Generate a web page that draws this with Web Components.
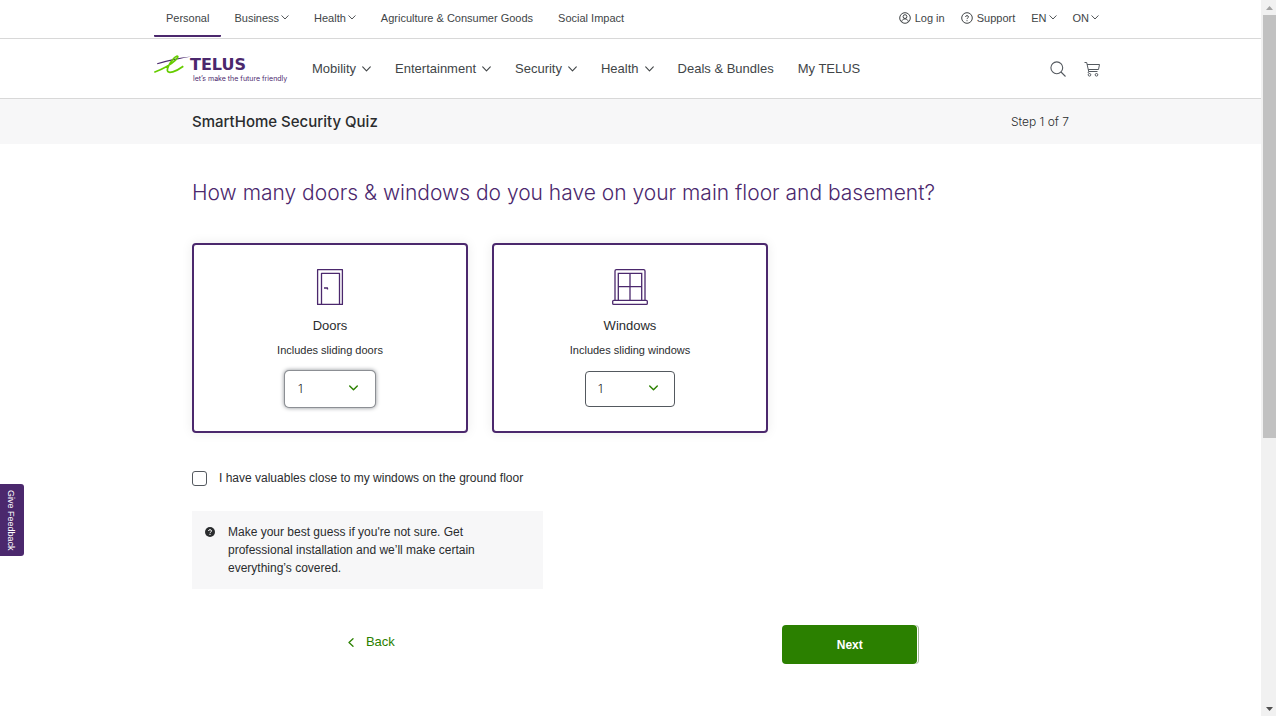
<!DOCTYPE html>
<html lang="en">
<head>
<meta charset="utf-8">
<meta name="viewport" content="width=device-width, initial-scale=1">
<title>SmartHome Security Quiz | TELUS</title>
<style>
  :root {
    --purple: #4b286d;
    --green: #2b8000;
    --text: #2a2c2e;
    --muted: #54595f;
    --line: #d8d8d8;
    --panel: #f7f7f8;
    --sans: "Liberation Sans", Arial, sans-serif;
    --light: Inter, "Liberation Sans", sans-serif;
  }
  body { margin: 0; background: #fff; color: var(--text); font: 12px/18px var(--sans); }
</style>
</head>
<body>
<telus-app></telus-app>
<script>
const define = (name, html) => {
  const template = document.createElement('template');
  template.innerHTML = html;
  customElements.define(name, class extends HTMLElement {
    constructor() {
      super();
      this.attachShadow({ mode: 'open' }).append(template.content.cloneNode(true));
    }
  });
};

define('ui-chevron', `
  <style>
    :host { display: block; width: 9px; height: 6px; flex: none; }
    :host([small]) { width: 8px; height: 5px; }
    svg { display: block; width: 100%; height: 100%; }
  </style>
  <svg viewBox="0 0 9 6" fill="none" stroke="currentColor" stroke-width="var(--w, 1.1)" stroke-linecap="round" stroke-linejoin="round" aria-hidden="true"><path d="M.7.9 4.5 4.8 8.3.9"/></svg>
`);

define('nav-link', `
  <style>
    :host { display: flex; align-items: center; height: 100%; color: #414547; }
    a { display: flex; align-items: center; gap: var(--nav-gap, 6px); color: inherit; text-decoration: none; white-space: nowrap; }
    :host([current]) { box-sizing: border-box; padding: 0 12px; margin-left: -12px; margin-right: -12px; border-bottom: 2px solid var(--purple); border-radius: 1px; padding-top: 2px; }
  </style>
  <a href="#"><slot name="icon"></slot><span><slot></slot></span><slot name="after"></slot></a>
`);

define('telus-logo', `
  <style>
    :host { display: block; width: 134px; }
    a { display: grid; grid-template-columns: 36px 1fr; color: var(--purple); text-decoration: none; }
    svg { display: block; grid-row: 1 / 3; width: 38px; height: 28px; margin-top: 2px; }
    strong { font: bold 16px/16px "DejaVu Sans", sans-serif; padding-top: 4px; }
    small { font: 7px/10px Inter, sans-serif; white-space: nowrap; padding: 1px 0 0 3px; }
  </style>
  <a href="#" aria-label="TELUS home">
    <svg viewBox="0 0 38 28" aria-hidden="true">
      <path d="M3 8.2C13 5 25 2.200 37.500 1.400 27 3.500 17 5.400 3.400 9.200Z" fill="#4b286d"/>
      <path d="M.3 17.200C8 14.500 17 9.500 21.500 5.200 24 2.700 24.600.8 22.800 1.200 19.500 2.200 13 11.500 13.400 15.600 13.900 19.200 22 16.700 29.300 11.300" fill="none" stroke="#66cc00" stroke-width="1.700"/>
    </svg>
    <strong>TELUS</strong>
    <small>let’s make the future friendly</small>
  </a>
`);

define('top-bar', `
  <style>
    :host { display: block; border-bottom: 1px solid var(--line); --nav-gap: 2px; font-size: 11px; line-height: 16px; }
    .inner { box-sizing: border-box; max-width: 953px; height: 38px; margin: 0 auto; padding: 0 8px 0 12px; display: flex; justify-content: space-between; }
    nav { display: flex; align-items: center; gap: 25px; height: 37px; }
    nav nav-link:not([current]) { height: 35px; align-self: start; }
    nav nav-link[current] { padding-top: 0; }
    .tools { gap: 16px; }
    .tools nav-link { --nav-gap: 4px; }
    .tools nav-link.pick { --nav-gap: 2px; }
    svg { display: block; width: 12px; height: 12px; }
  </style>
  <div class="inner">
    <nav aria-label="Sections">
      <nav-link current>Personal</nav-link>
      <nav-link>Business<ui-chevron small slot="after"></ui-chevron></nav-link>
      <nav-link>Health<ui-chevron small slot="after"></ui-chevron></nav-link>
      <nav-link>Agriculture &amp; Consumer Goods</nav-link>
      <nav-link>Social Impact</nav-link>
    </nav>
    <nav class="tools" aria-label="Account">
      <nav-link>
        <svg slot="icon" viewBox="0 0 12 12" fill="none" stroke="currentColor" aria-hidden="true"><circle cx="6" cy="6" r="5.300"/><circle cx="6" cy="4.600" r="1.900"/><path d="M2.600 9.900C3 7.800 4.300 6.900 6 6.900s3 .9 3.400 3"/></svg>Log in</nav-link>
      <nav-link>
        <svg slot="icon" viewBox="0 0 12 12" fill="none" stroke="currentColor" aria-hidden="true"><circle cx="6" cy="6" r="5.300"/><path d="M4.500 4.900C4.500 3.200 7.500 3.200 7.500 4.900 7.500 5.900 6 5.900 6 7.100M6 8.200v1"/></svg>Support</nav-link>
      <nav-link class="pick">EN<ui-chevron small slot="after"></ui-chevron></nav-link>
      <nav-link class="pick">ON<ui-chevron small slot="after"></ui-chevron></nav-link>
    </nav>
  </div>
`);

define('main-bar', `
  <style>
    :host { display: block; border-bottom: 1px solid var(--line); font-size: 13px; line-height: 18px; }
    .inner { box-sizing: border-box; max-width: 953px; height: 59px; margin: 0 auto; padding-right: 7px; display: flex; align-items: center; }
    nav { display: flex; gap: 24px; margin-left: 24px; }
    .tools { margin-left: auto; display: flex; gap: 18px; }
    button { padding: 0; border: 0; background: none; color: var(--muted); }
    svg { display: block; width: 16px; height: 16px; }
  </style>
  <div class="inner">
    <telus-logo></telus-logo>
    <nav aria-label="Main">
      <nav-link>Mobility<ui-chevron slot="after"></ui-chevron></nav-link>
      <nav-link>Entertainment<ui-chevron slot="after"></ui-chevron></nav-link>
      <nav-link>Security<ui-chevron slot="after"></ui-chevron></nav-link>
      <nav-link>Health<ui-chevron slot="after"></ui-chevron></nav-link>
      <nav-link>Deals &amp; Bundles</nav-link>
      <nav-link>My TELUS</nav-link>
    </nav>
    <div class="tools">
      <button aria-label="Search"><svg viewBox="0 0 16 16" fill="none" stroke="currentColor" stroke-width="1.100"><circle cx="6.800" cy="6.800" r="5.900"/><path d="m11 11 4.500 4.500"/></svg></button>
      <button aria-label="Cart"><svg viewBox="0 0 16 16" fill="none" stroke="currentColor"><path d="M.5 1.500H2.700L4.700 10.500H13.500M3 3.500H15.500L14.500 8.500H4.200M4.700 10.500 4 12"/><circle cx="5.500" cy="13.800" r="1.300"/><circle cx="12.500" cy="13.800" r="1.300"/></svg></button>
    </div>
  </div>
`);

define('quiz-header', `
  <style>
    :host { display: block; background: var(--panel); }
    .inner { max-width: 877px; height: 45px; margin: 0 auto; display: flex; align-items: center; justify-content: space-between; }
    h2 { margin: 0; font: 500 15px/20px var(--light); }
    .step { font: 300 12px/18px var(--light); }
  </style>
  <div class="inner"><h2><slot></slot></h2><span class="step"><slot name="step"></slot></span></div>
`);

const countTemplate = document.createElement('template');
countTemplate.innerHTML = `
  <style>
    :host { display: flex; flex-direction: column; align-items: center; box-sizing: border-box; height: 190px; padding-top: 23px; border: 2px solid var(--purple); border-radius: 4px; box-shadow: 0 0 12px rgba(0, 0, 0, .08); }
    ::slotted(svg) { display: block; width: 38px; height: 38px; }
    label { display: flex; flex-direction: column; align-items: center; }
    b { font-weight: 400; font-size: 13px; line-height: 18px; margin-top: 11px; }
    small { font-size: 11px; line-height: 16px; margin-top: 7px; }
    .field { display: grid; align-items: center; margin-top: 13px; }
    .field > * { grid-area: 1 / 1; }
    select { appearance: none; box-sizing: border-box; width: 90px; height: 36px; padding: 0 12px; border: 1px solid var(--muted); border-radius: 4px; background: #fff; color: var(--text); font: 300 12px/18px var(--light); outline: none; }
    :host([active]) select { border-color: #fff; box-shadow: 0 0 0 1px #8c8f94, 0 0 4px 1px #8c8f94; }
    ui-chevron { justify-self: end; margin: 0 17px 2px 0; color: var(--green); pointer-events: none; --w: 1.4; }
  </style>
  <slot></slot>
  <label for="count"><b></b><small></small></label>
  <div class="field"><select id="count"><option>0</option><option selected>1</option><option>2</option><option>3</option><option>4</option></select><ui-chevron></ui-chevron></div>
`;
customElements.define('count-card', class extends HTMLElement {
  constructor() {
    super();
    const root = this.attachShadow({ mode: 'open' });
    root.append(countTemplate.content.cloneNode(true));
  }
  connectedCallback() {
    this.shadowRoot.querySelector('b').textContent = this.getAttribute('heading');
    this.shadowRoot.querySelector('small').textContent = this.getAttribute('note');
  }
});

define('check-field', `
  <style>
    :host { display: flex; align-items: center; gap: 12px; font: 12px/18px var(--sans); }
    input { appearance: none; box-sizing: border-box; width: 15px; height: 15px; margin: 0; border: 1px solid var(--muted); border-radius: 3px; background: #fff; }
    input:checked { background: var(--green); }
  </style>
  <input type="checkbox" id="check"><label for="check"><slot></slot></label>
`);

define('hint-box', `
  <style>
    :host { display: flex; box-sizing: border-box; max-width: 351px; gap: 13px; padding: 12px 52px 12px 13px; background: var(--panel); font: 12px/18px var(--sans); }
    svg { flex: none; width: 10px; height: 10px; margin-top: 4px; }
    p { margin: 0; }
  </style>
  <svg viewBox="0 0 10 10" aria-hidden="true"><circle cx="5" cy="5" r="5" fill="#2a2c2e"/><path d="M3.500 4C3.500 2.200 6.500 2.200 6.500 4 6.500 5 5 5 5 6.200M5 7v1" fill="none" stroke="#fff"/></svg>
  <p><slot></slot></p>
`);

define('step-actions', `
  <style>
    :host { display: grid; grid-template-columns: 9fr 2fr 11fr; justify-items: center; align-items: start; }
    a { display: flex; align-items: center; gap: 12px; margin-top: 8px; color: var(--green); text-decoration: none; font-size: 13px; line-height: 18px; }
    svg { display: block; width: 6px; height: 9px; }
    button { grid-column: 3; width: 135px; height: 39px; padding: 0; border: 0; border-radius: 4px; background: var(--green); color: #fff; font: bold 12px/18px var(--sans); box-shadow: 1px 0 #fff, 2px 0 #a5b59b; }
  </style>
  <a href="#"><svg viewBox="0 0 6 9" fill="none" stroke="currentColor" stroke-width="1.300" stroke-linecap="round" stroke-linejoin="round" aria-hidden="true"><path d="M5 .8 1 4.500 5 8.200"/></svg>Back</a>
  <button type="button">Next</button>
`);

define('feedback-tab', `
  <style>
    :host { position: fixed; left: 0; top: 484px; z-index: 2; }
    button { display: flex; align-items: center; justify-content: center; width: 24px; height: 72px; padding: 0 2px 0 0; border: 0; border-radius: 0 3px 3px 0; background: var(--purple); color: #fff; font: 9px/12px var(--sans); writing-mode: vertical-rl; flex-direction: row; }
  </style>
  <button type="button">Give Feedback</button>
`);

define('scroll-rail', `
  <style>
    :host { position: sticky; top: 0; height: 100vh; display: grid; grid-template-rows: 15px 37fr 23fr 15px; background: #f1f1f1; }
    svg { display: block; width: 7px; height: 4px; place-self: center; margin-left: 2px; }
    .thumb { margin-left: 2px; background: #c1c1c1; }
    .down { grid-row: 4; }
  </style>
  <svg viewBox="0 0 7 4" fill="#a3a3a3" aria-hidden="true"><path d="M0 4 3.500 0 7 4Z"/></svg>
  <div class="thumb"></div>
  <svg class="down" viewBox="0 0 7 4" fill="#505050" aria-hidden="true"><path d="M0 0 3.500 4 7 0Z"/></svg>
`);

define('telus-app', `
  <style>
    :host { display: grid; grid-template-columns: 1fr 15px; align-items: start; min-height: 100vh; }
    main { max-width: 877px; margin: 0 auto; padding: 34px 0 48px; }
    h1 { margin: 0; color: var(--purple); font: 300 21px/30px var(--light); }
    .cards { display: grid; grid-template-columns: repeat(auto-fit, 276px); gap: 24px; margin: 35px 0 36px; }
    hint-box { margin: 24px 0 36px; }
  </style>
  <div>
    <header><top-bar></top-bar><main-bar></main-bar></header>
    <quiz-header>SmartHome Security Quiz<span slot="step">Step 1 of 7</span></quiz-header>
    <main>
      <h1>How many doors &amp; windows do you have on your main floor and basement?</h1>
      <div class="cards">
        <count-card active heading="Doors" note="Includes sliding doors">
          <svg viewBox="0 0 38 38" fill="none" stroke="#4b286d" stroke-width="1.300" aria-hidden="true"><path d="M6.600 1.600H31.400V36.400H6.600ZM10.500 36V5.300H28.500V36M13 20H16.500V21.500" stroke-linejoin="round"/></svg>
        </count-card>
        <count-card heading="Windows" note="Includes sliding windows">
          <svg viewBox="0 0 38 38" fill="none" stroke="#4b286d" stroke-width="1.300" aria-hidden="true"><path d="M4 32V3Q4 1.600 5.400 1.600H32.600Q34 1.600 34 3V32M7.300 32V5.300H30.700V32M7.300 18.700H30.700M19 5.300V32"/><rect x="1.700" y="32.300" width="34.600" height="4.100" rx="1"/></svg>
        </count-card>
      </div>
      <check-field>I have valuables close to my windows on the ground floor</check-field>
      <hint-box>Make your best guess if you're not sure. Get professional installation and we’ll make certain everything’s covered.</hint-box>
      <step-actions></step-actions>
    </main>
  </div>
  <scroll-rail aria-hidden="true"></scroll-rail>
  <feedback-tab></feedback-tab>
`);
</script>
</body>
</html>
